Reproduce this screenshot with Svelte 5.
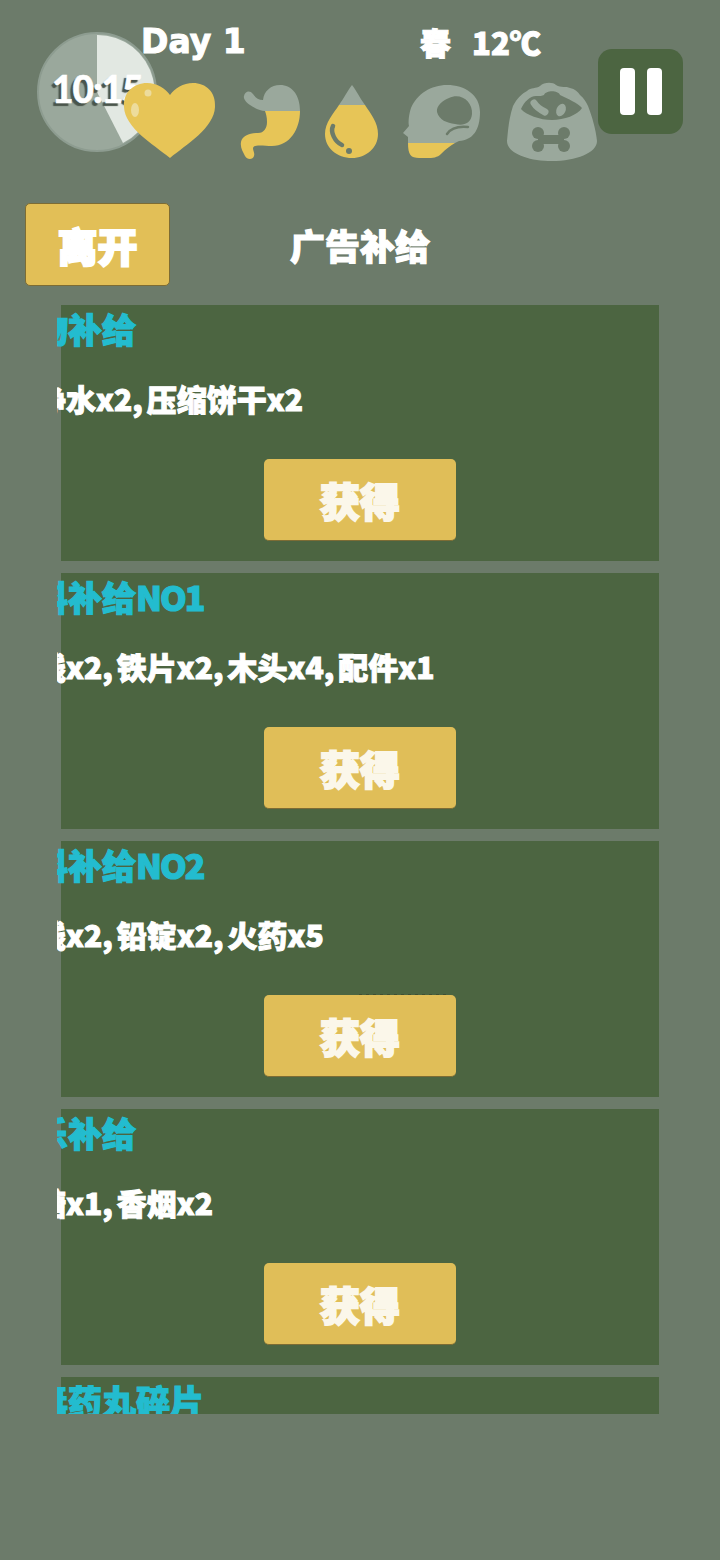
<script>
  const supplies = [
    { title: '食物补给', desc: '净水x2,压缩饼干x2' },
    { title: '材料补给', no: 'NO1', desc: '线x2,铁片x2,木头x4,配件x1' },
    { title: '材料补给', no: 'NO2', desc: '线x2,铅锭x2,火药x5', scuffed: true },
    { title: '娱乐补给', desc: '糖x1,香烟x2' },
    { title: '解毒药丸碎片' }
  ];
</script>

<div class="screen">
  <header class="hud">
    <div class="clock">
      <svg class="dial" width="120" height="120" viewBox="0 0 120 120" aria-hidden="true">
        <circle cx="60" cy="60" r="59" fill="#9aa89c" stroke="#8d9c90" stroke-width="2" />
        <path d="M60 60 V3 A57 57 0 0 1 86 111 Z" fill="#e2e8e2" />
      </svg>
      <span class="time">10:15</span>
    </div>

    <span class="day">Day 1</span>
    <span class="weather"><span>春</span><span>12℃</span></span>

    <div class="stats">
      <svg class="heart" width="94" height="78" viewBox="0 0 94 78" aria-hidden="true">
        <path d="M47 76 C30 62 2 46 1 25 C0 10 11 1 24 1 C34 1 42 6 47 13 C52 6 60 1 70 1 C83 1 93 10 92 25 C91 46 64 62 47 76 Z" fill="#e7c557" />
        <ellipse cx="12" cy="28" rx="4" ry="7" fill="#eddc9c" />
        <circle cx="25" cy="11" r="3.5" fill="#eddc9c" />
      </svg>

      <svg class="stomach" width="62" height="76" viewBox="0 0 62 76" aria-hidden="true">
        <path d="M25 27 C21 27 14 24 10 21 C7 19 3 15 4 12 C5 7 10 6 13 10 C15 13 18 16 23 16 C24 7 31 1 40 1 C52 1 60 11 60 27 Z" fill="#9aa89c" />
        <path d="M25 27 H60 C60 45 50 62 32 62 C24 62 14 60 13 64 C13 67 15 69 14 72 C13 76 7 76 5 72 C3 68 0 64 1 58 C2 52 10 49 18 49 C24 49 27 44 27 38 C27 33 26 30 25 27 Z" fill="#e7c557" />
      </svg>

      <svg class="drop" width="56" height="76" viewBox="0 0 56 76" aria-hidden="true">
        <path d="M28 1 C32 6 36 14 41 21 H15 C20 14 24 6 28 1 Z" fill="#9aa89c" />
        <path d="M15 21 H41 C47 30 54 39 54 50 C54 64 42 74 28 74 C13 74 1 64 1 50 C1 39 9 30 15 21 Z" fill="#e7c557" />
        <path d="M9 42 C6 48 11 58 18 61" fill="none" stroke="#6c7b6a" stroke-width="4.5" stroke-linecap="round" />
        <circle cx="25" cy="67" r="3" fill="#6c7b6a" />
      </svg>

      <svg class="head" width="78" height="76" viewBox="0 0 78 76" aria-hidden="true">
        <path d="M0 49 L6 42 C5 38 6 30 8 24 C14 10 28 1 44 1 C62 1 77 11 77 28 C77 46 70 56 56 57 L52 59 H5 L5 53 Z" fill="#9aa89c" />
        <path d="M5 59 H52 C47 62 43 65 38 70 C33 75 26 74 16 74 C8 74 5 71 5 59 Z" fill="#e7c557" />
        <path d="M46 14 C58 8 70 18 69 30 C68 40 60 42 52 40 C44 39 36 36 34 28 C33 22 40 16 46 14 Z" fill="#6c7b6a" />
        <path d="M65 43 C55 42 48 44 44 50" fill="none" stroke="#6c7b6a" stroke-width="2.5" stroke-linecap="round" />
      </svg>

      <svg class="bowl" width="92" height="80" viewBox="0 0 92 80" aria-hidden="true">
        <path d="M7 24 C11 16 17 11 21 9 C25 5 30 7 34 4 C38 0 47 0 50 3 C55 6 60 4 64 6 C69 7 72 10 74 13 C78 16 80 20 82 24 C86 34 90 48 91 59 C91 71 70 79 46 79 C22 79 1 71 1 59 C2 48 3 36 7 24 Z" fill="#9aa89c" />
        <path d="M15 27 C18 20 24 14 30 14 C34 14 36 14 38 13 C40 8 52 8 54 13 C62 17 72 21 76 26 C72 33 58 38 46 38 C34 38 20 33 15 27 Z" fill="#6c7b6a" />
        <path d="M28 21 C31 26 35 28 39 30" fill="none" stroke="#9aa89c" stroke-width="7" stroke-linecap="round" />
        <ellipse cx="55" cy="28" rx="4.5" ry="6.5" transform="rotate(25 55 28)" fill="#9aa89c" />
        <g fill="#6c7b6a">
          <circle cx="32" cy="51" r="6" />
          <circle cx="32" cy="64" r="6" />
          <circle cx="58" cy="51" r="6" />
          <circle cx="58" cy="64" r="6" />
          <rect x="32" y="53" width="26" height="9" />
        </g>
      </svg>
    </div>

    <button class="pause" aria-label="暂停"><span></span><span></span></button>
  </header>

  <div class="bar">
    <button class="leave">离开</button>
    <h1>广告补给</h1>
  </div>

  <div class="list">
    {#each supplies as item}
      <section class="card">
        <h2>{item.title}{#if item.no}<span class="no">{item.no}</span>{/if}</h2>
        {#if item.desc}
          <p>
            {#each item.desc.split(',') as part, i}{#if i}<span class="comma">,</span>{/if}{part}{/each}
          </p>
          <button class="get" class:scuffed={item.scuffed}>获得</button>
        {/if}
      </section>
    {/each}
  </div>
</div>

<style>
  :global(body) {
    margin: 0;
    background: #6c7b6a;
  }

  .screen {
    position: relative;
    width: 720px;
    height: 1560px;
    overflow: hidden;
    background: #6c7b6a;
    color: #fff;
    font-family: "Noto Sans CJK SC", "Open Sans", sans-serif;
    font-weight: 900;
  }

  .hud {
    position: relative;
    height: 192px;
  }

  .clock {
    position: absolute;
    left: 37px;
    top: 32px;
    width: 120px;
    height: 120px;
  }

  .dial {
    display: block;
  }

  .time {
    position: absolute;
    left: 15px;
    top: 34px;
    font: 900 37px/46px "Lato", sans-serif;
    letter-spacing: -1px;
    -webkit-text-stroke: 0.5px #fff;
    text-shadow: -3px 3px 1px #4a554b;
  }

  .day {
    position: absolute;
    left: 141px;
    top: 21px;
    font: 700 33px/42px "DejaVu Sans", sans-serif;
    -webkit-text-stroke: 1px #fff;
  }

  .weather {
    position: absolute;
    left: 420px;
    top: 21px;
    display: flex;
    gap: 21px;
    font-size: 31px;
    line-height: 42px;
    -webkit-text-stroke: 1px #fff;
  }

  .stats {
    position: absolute;
    left: 123px;
    top: 82px;
    display: flex;
    align-items: flex-start;
  }

  .stomach { margin: 2px 0 0 23px; }
  .drop { margin: 2px 0 0 22px; }
  .head { margin: 2px 0 0 23px; }
  .bowl { margin: 0 0 0 25px; }

  .pause {
    position: absolute;
    left: 598px;
    top: 49px;
    display: flex;
    justify-content: center;
    gap: 12px;
    width: 85px;
    height: 85px;
    padding: 19px 0 0;
    border: 0;
    border-radius: 14px;
    background: #4c6541;
  }

  .pause span {
    width: 15px;
    height: 47px;
    border-radius: 4px;
    background: #fff;
  }

  .bar {
    position: relative;
    display: flex;
    align-items: center;
    height: 105px;
    margin-bottom: 8px;
    padding-left: 25px;
  }

  .leave {
    width: 145px;
    height: 83px;
    border: 1px solid #7d6c34;
    border-radius: 5px;
    background: #e2bf57;
    color: #fff;
    font: inherit;
    font-size: 40px;
    -webkit-text-stroke: 2px #fff;
  }

  h1 {
    position: absolute;
    left: 0;
    right: 0;
    margin: 0;
    text-align: center;
    font-size: 35px;
    font-weight: 900;
    -webkit-text-stroke: 1.2px #fff;
  }

  .list {
    display: flex;
    flex-direction: column;
    gap: 12px;
    width: 602px;
    height: 1109px;
    margin-left: 57px;
    overflow: hidden;
  }

  .card {
    flex: none;
    position: relative;
    height: 256px;
    margin-left: 4px;
    background: #4c6541;
  }

  h2 {
    margin: 0 0 0 -61px;
    padding-top: 1px;
    height: 66px;
    color: #23bccf;
    font-size: 34px;
    font-weight: 900;
    line-height: 46px;
    white-space: nowrap;
    -webkit-text-stroke: 1.2px #23bccf;
  }

  .no {
    letter-spacing: -2px;
  }

  p {
    margin: -4px 0 0 -25px;
    font-size: 30px;
    line-height: 60px;
    white-space: nowrap;
    -webkit-text-stroke: 1px #fff;
  }

  .comma {
    margin-right: 4px;
  }

  .get {
    position: absolute;
    left: 203px;
    top: 154px;
    width: 192px;
    height: 82px;
    border: 0;
    border-bottom: 1px solid #7d6c34;
    border-radius: 5px;
    background: #e0be58;
    color: #fbf7ea;
    font: inherit;
    font-size: 40px;
    -webkit-text-stroke: 2px #fbf7ea;
  }

  .scuffed::before {
    content: "";
    position: absolute;
    left: 95px;
    right: 6px;
    top: -1px;
    height: 1px;
    background: repeating-linear-gradient(90deg, #3f4f33 0 3px, transparent 3px 7px);
  }
</style>
